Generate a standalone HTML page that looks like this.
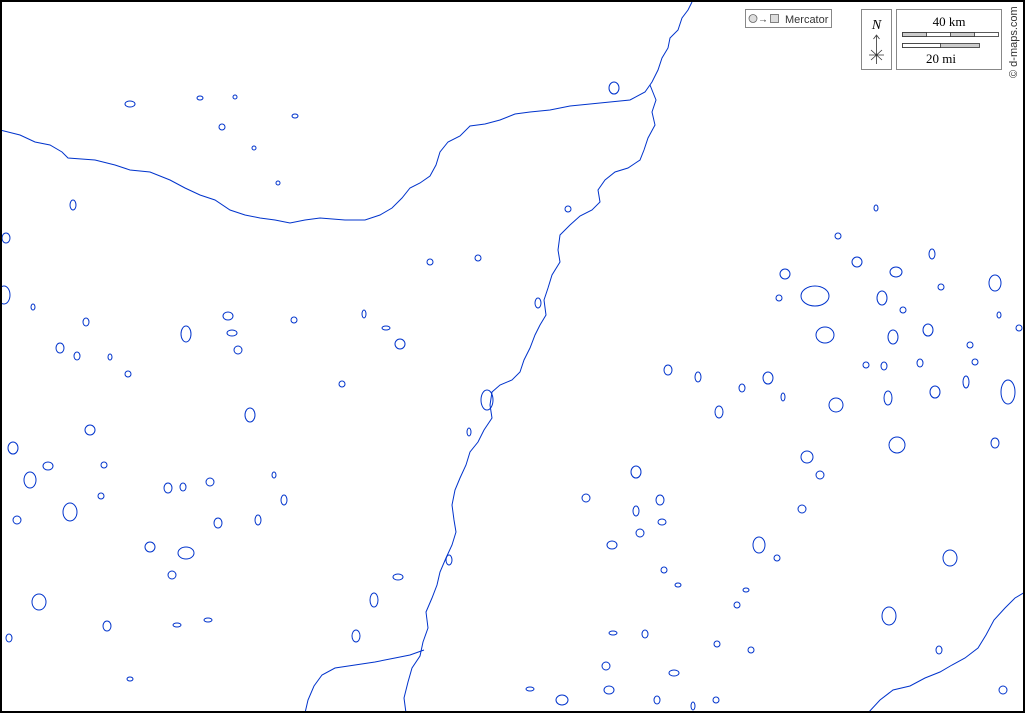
<!DOCTYPE html>
<html><head><meta charset="utf-8"><style>
html,body{margin:0;padding:0;background:#fff;}
svg{display:block;}
</style></head><body>
<svg width="1025" height="713" viewBox="0 0 1025 713" xmlns="http://www.w3.org/2000/svg">
<rect x="0" y="0" width="1025" height="713" fill="#fff"/>
<g fill="none" stroke="#0033cc" stroke-width="1">
<path d="M0,130 L20,135 L35,142 L50,145 L62,152 L68,158 L95,160 L115,165 L130,170 L150,172 L170,180 L185,188 L200,195 L215,200 L230,210 L245,215 L260,218 L275,220 L290,223 L305,220 L320,218 L345,220 L365,220 L380,215 L392,208 L402,198 L410,188 L420,183 L430,176 L436,165 L440,152 L448,142 L460,136 L470,126 L485,124 L500,120 L515,114 L530,112 L550,110 L570,106 L590,104 L610,102 L630,100 L645,92 L652,82 L658,70 L662,58 L668,48 L670,38 L678,30 L682,18 L688,10 L692,2"/>
<path d="M650,85 L656,100 L652,112 L655,125 L648,138 L644,150 L640,160 L628,168 L615,172 L605,180 L598,190 L600,202 L592,210 L580,216 L570,225 L560,235 L558,250 L560,262 L552,275 L548,288 L544,300 L546,315 L540,325 L535,335 L530,348 L524,360 L520,372 L512,380 L500,385 L492,392 L490,405 L492,418 L484,430 L478,442 L470,452 L466,465 L460,478 L455,490 L452,505 L454,520 L456,532 L452,545 L446,558 L440,572 L437,585 L432,598 L426,612 L428,628 L423,642 L420,656 L412,668 L408,682 L404,698 L406,713"/>
<path d="M424,650 L410,655 L395,658 L375,662 L355,665 L335,668 L322,675 L314,686 L308,700 L305,713"/>
<path d="M868,713 L880,700 L893,690 L910,686 L925,678 L940,672 L952,665 L965,658 L978,648 L986,635 L994,620 L1005,608 L1015,598 L1025,592"/>
<g>
<ellipse cx="130" cy="104" rx="5" ry="3"/><ellipse cx="200" cy="98" rx="3" ry="2"/><ellipse cx="235" cy="97" rx="2" ry="2"/><ellipse cx="222" cy="127" rx="3" ry="3"/><ellipse cx="295" cy="116" rx="3" ry="2"/><ellipse cx="254" cy="148" rx="2" ry="2"/><ellipse cx="278" cy="183" rx="2" ry="2"/>
<ellipse cx="73" cy="205" rx="3" ry="5"/><ellipse cx="6" cy="238" rx="4" ry="5"/><ellipse cx="4" cy="295" rx="6" ry="9"/><ellipse cx="33" cy="307" rx="2" ry="3"/><ellipse cx="86" cy="322" rx="3" ry="4"/>
<ellipse cx="186" cy="334" rx="5" ry="8"/><ellipse cx="228" cy="316" rx="5" ry="4"/><ellipse cx="232" cy="333" rx="5" ry="3"/><ellipse cx="238" cy="350" rx="4" ry="4"/><ellipse cx="294" cy="320" rx="3" ry="3"/>
<ellipse cx="60" cy="348" rx="4" ry="5"/><ellipse cx="77" cy="356" rx="3" ry="4"/><ellipse cx="110" cy="357" rx="2" ry="3"/><ellipse cx="128" cy="374" rx="3" ry="3"/>
<ellipse cx="250" cy="415" rx="5" ry="7"/><ellipse cx="342" cy="384" rx="3" ry="3"/><ellipse cx="364" cy="314" rx="2" ry="4"/><ellipse cx="386" cy="328" rx="4" ry="2"/><ellipse cx="400" cy="344" rx="5" ry="5"/>
<ellipse cx="430" cy="262" rx="3" ry="3"/><ellipse cx="478" cy="258" rx="3" ry="3"/><ellipse cx="568" cy="209" rx="3" ry="3"/><ellipse cx="538" cy="303" rx="3" ry="5"/><ellipse cx="487" cy="400" rx="6" ry="10"/><ellipse cx="469" cy="432" rx="2" ry="4"/>
<ellipse cx="614" cy="88" rx="5" ry="6"/><ellipse cx="13" cy="448" rx="5" ry="6"/><ellipse cx="30" cy="480" rx="6" ry="8"/><ellipse cx="70" cy="512" rx="7" ry="9"/><ellipse cx="90" cy="430" rx="5" ry="5"/><ellipse cx="48" cy="466" rx="5" ry="4"/>
<ellipse cx="17" cy="520" rx="4" ry="4"/><ellipse cx="39" cy="602" rx="7" ry="8"/><ellipse cx="107" cy="626" rx="4" ry="5"/><ellipse cx="9" cy="638" rx="3" ry="4"/>
<ellipse cx="150" cy="547" rx="5" ry="5"/><ellipse cx="186" cy="553" rx="8" ry="6"/><ellipse cx="172" cy="575" rx="4" ry="4"/><ellipse cx="168" cy="488" rx="4" ry="5"/><ellipse cx="183" cy="487" rx="3" ry="4"/><ellipse cx="210" cy="482" rx="4" ry="4"/><ellipse cx="218" cy="523" rx="4" ry="5"/>
<ellipse cx="258" cy="520" rx="3" ry="5"/><ellipse cx="284" cy="500" rx="3" ry="5"/><ellipse cx="274" cy="475" rx="2" ry="3"/><ellipse cx="104" cy="465" rx="3" ry="3"/><ellipse cx="101" cy="496" rx="3" ry="3"/>
<ellipse cx="374" cy="600" rx="4" ry="7"/><ellipse cx="398" cy="577" rx="5" ry="3"/><ellipse cx="356" cy="636" rx="4" ry="6"/><ellipse cx="449" cy="560" rx="3" ry="5"/><ellipse cx="130" cy="679" rx="3" ry="2"/>
<ellipse cx="785" cy="274" rx="5" ry="5"/><ellipse cx="815" cy="296" rx="14" ry="10"/><ellipse cx="825" cy="335" rx="9" ry="8"/><ellipse cx="882" cy="298" rx="5" ry="7"/><ellipse cx="857" cy="262" rx="5" ry="5"/><ellipse cx="896" cy="272" rx="6" ry="5"/>
<ellipse cx="779" cy="298" rx="3" ry="3"/><ellipse cx="838" cy="236" rx="3" ry="3"/><ellipse cx="876" cy="208" rx="2" ry="3"/><ellipse cx="932" cy="254" rx="3" ry="5"/><ellipse cx="995" cy="283" rx="6" ry="8"/><ellipse cx="941" cy="287" rx="3" ry="3"/>
<ellipse cx="928" cy="330" rx="5" ry="6"/><ellipse cx="893" cy="337" rx="5" ry="7"/><ellipse cx="903" cy="310" rx="3" ry="3"/><ellipse cx="970" cy="345" rx="3" ry="3"/><ellipse cx="975" cy="362" rx="3" ry="3"/><ellipse cx="1019" cy="328" rx="3" ry="3"/><ellipse cx="999" cy="315" rx="2" ry="3"/>
<ellipse cx="1008" cy="392" rx="7" ry="12"/><ellipse cx="966" cy="382" rx="3" ry="6"/><ellipse cx="935" cy="392" rx="5" ry="6"/><ellipse cx="888" cy="398" rx="4" ry="7"/><ellipse cx="836" cy="405" rx="7" ry="7"/><ellipse cx="866" cy="365" rx="3" ry="3"/><ellipse cx="884" cy="366" rx="3" ry="4"/><ellipse cx="920" cy="363" rx="3" ry="4"/>
<ellipse cx="897" cy="445" rx="8" ry="8"/><ellipse cx="995" cy="443" rx="4" ry="5"/><ellipse cx="807" cy="457" rx="6" ry="6"/><ellipse cx="820" cy="475" rx="4" ry="4"/><ellipse cx="802" cy="509" rx="4" ry="4"/>
<ellipse cx="768" cy="378" rx="5" ry="6"/><ellipse cx="742" cy="388" rx="3" ry="4"/><ellipse cx="719" cy="412" rx="4" ry="6"/><ellipse cx="698" cy="377" rx="3" ry="5"/><ellipse cx="668" cy="370" rx="4" ry="5"/><ellipse cx="783" cy="397" rx="2" ry="4"/>
<ellipse cx="636" cy="472" rx="5" ry="6"/><ellipse cx="660" cy="500" rx="4" ry="5"/><ellipse cx="636" cy="511" rx="3" ry="5"/><ellipse cx="586" cy="498" rx="4" ry="4"/><ellipse cx="612" cy="545" rx="5" ry="4"/><ellipse cx="640" cy="533" rx="4" ry="4"/><ellipse cx="662" cy="522" rx="4" ry="3"/>
<ellipse cx="759" cy="545" rx="6" ry="8"/><ellipse cx="777" cy="558" rx="3" ry="3"/><ellipse cx="950" cy="558" rx="7" ry="8"/><ellipse cx="889" cy="616" rx="7" ry="9"/><ellipse cx="737" cy="605" rx="3" ry="3"/><ellipse cx="746" cy="590" rx="3" ry="2"/>
<ellipse cx="717" cy="644" rx="3" ry="3"/><ellipse cx="751" cy="650" rx="3" ry="3"/><ellipse cx="939" cy="650" rx="3" ry="4"/><ellipse cx="606" cy="666" rx="4" ry="4"/><ellipse cx="609" cy="690" rx="5" ry="4"/><ellipse cx="562" cy="700" rx="6" ry="5"/>
<ellipse cx="674" cy="673" rx="5" ry="3"/><ellipse cx="657" cy="700" rx="3" ry="4"/><ellipse cx="693" cy="706" rx="2" ry="4"/><ellipse cx="716" cy="700" rx="3" ry="3"/><ellipse cx="1003" cy="690" rx="4" ry="4"/><ellipse cx="530" cy="689" rx="4" ry="2"/>
<ellipse cx="613" cy="633" rx="4" ry="2"/><ellipse cx="645" cy="634" rx="3" ry="4"/><ellipse cx="664" cy="570" rx="3" ry="3"/><ellipse cx="678" cy="585" rx="3" ry="2"/><ellipse cx="208" cy="620" rx="4" ry="2"/><ellipse cx="177" cy="625" rx="4" ry="2"/>
</g>
</g>
<!-- legend -->
<rect x="745.5" y="9.5" width="86" height="18" fill="#fff" stroke="#888"/>
<circle cx="753" cy="18.5" r="4" fill="#ddd" stroke="#666" stroke-width="0.8"/>
<text x="758" y="22.5" font-family="Liberation Sans, sans-serif" font-size="10" fill="#333">→</text>
<rect x="770.5" y="14.5" width="8" height="8" fill="#ddd" stroke="#666" stroke-width="0.8"/>
<text x="785" y="23" font-family="Liberation Sans, sans-serif" font-size="11" fill="#333">Mercator</text>
<rect x="861.5" y="9.5" width="30" height="60" fill="#fff" stroke="#888"/>
<text x="876.5" y="29" text-anchor="middle" font-family="Liberation Serif, serif" font-style="italic" font-size="14" fill="#000">N</text>
<path d="M876.5,36 L876.5,64 M873.5,39 L876.5,35 L879.5,39 M869,55 L884,55 M871,50 L882,60 M882,50 L871,60" stroke="#333" stroke-width="0.8" fill="none"/>
<rect x="896.5" y="9.5" width="105" height="60" fill="#fff" stroke="#888"/>
<text x="949" y="26" text-anchor="middle" font-family="Liberation Serif, serif" font-size="13" fill="#000">40 km</text>
<rect x="902.5" y="32.5" width="96" height="4" fill="#fff" stroke="#333" stroke-width="0.8"/>
<rect x="902.5" y="32.5" width="24" height="4" fill="#ccc" stroke="#333" stroke-width="0.8"/>
<rect x="950.5" y="32.5" width="24" height="4" fill="#ccc" stroke="#333" stroke-width="0.8"/>
<rect x="902.5" y="43.5" width="77" height="4" fill="#ccc" stroke="#333" stroke-width="0.8"/>
<rect x="902.5" y="43.5" width="38" height="4" fill="#fff" stroke="#333" stroke-width="0.8"/>
<text x="941" y="63" text-anchor="middle" font-family="Liberation Serif, serif" font-size="13" fill="#000">20 mi</text>
<text transform="translate(1017,78) rotate(-90)" font-family="Liberation Sans, sans-serif" font-size="11" fill="#333">© d-maps.com</text>
<rect x="1" y="1" width="1023" height="711" fill="none" stroke="#000" stroke-width="2"/>
</svg>
</body></html>
